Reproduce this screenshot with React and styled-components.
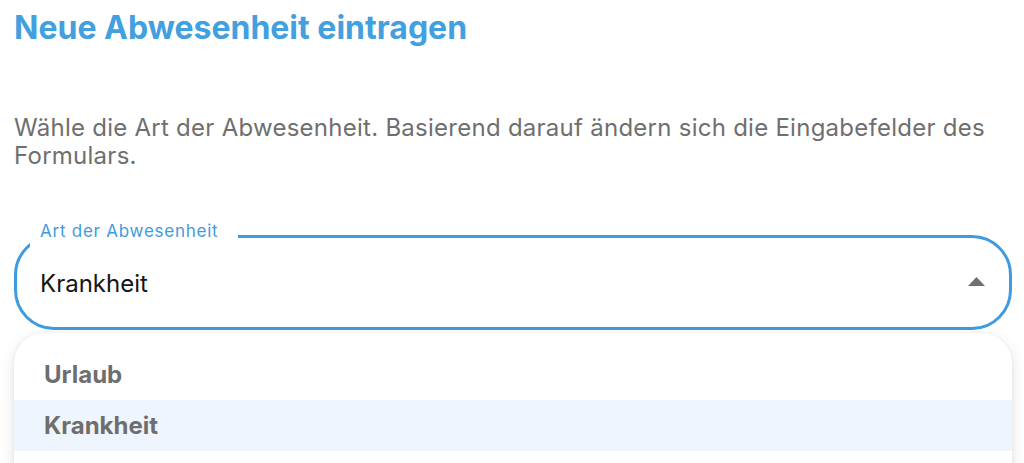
import { createGlobalStyle, styled } from "styled-components";

const GlobalStyle = createGlobalStyle`
  html, body {
    margin: 0;
    padding: 0;
    background: #ffffff;
    font-family: Inter, "Noto Sans", sans-serif;
  }
`;

const Page = styled.div`
  padding: 9px 12px 0 14px;
  height: 463px;
  box-sizing: border-box;
  overflow: hidden;
`;

const Title = styled.h2`
  margin: 0;
  color: #42a0e0;
  font-size: 32px;
  font-weight: 700;
  line-height: 38px;
  letter-spacing: 0;
`;

const Intro = styled.p`
  margin: 67px 0 0;
  color: #6f6f6f;
  font-size: 24px;
  line-height: 28px;
  font-weight: 400;
  letter-spacing: 0.26px;
`;

const Field = styled.fieldset`
  margin: 52px 0 0;
  padding: 0 24px 10px 23px;
  height: 108px;
  box-sizing: border-box;
  border: 3px solid #3f9be0;
  border-radius: 40px;
  display: flex;
  align-items: center;
  justify-content: space-between;
`;

const Legend = styled.legend`
  padding: 0 20px 10px 10px;
  margin-left: -10px;
  color: #3f9be0;
  font-size: 17px;
  line-height: 18px;
  letter-spacing: 0.75px;
`;

const Value = styled.span`
  color: #151515;
  font-size: 24px;
  line-height: 28px;
`;

const Caret = styled.svg`
  width: 17px;
  height: 9px;
  margin-top: -4px;
`;

const Menu = styled.ul`
  list-style: none;
  margin: 3px 0 0;
  padding: 16px 0 40px;
  background: #ffffff;
  border-radius: 30px 30px 0 0;
  box-shadow: 0 4px 14px rgba(0, 0, 0, 0.12), 0 0 3px rgba(0, 0, 0, 0.06);
`;

const Item = styled.li`
  height: 51px;
  display: flex;
  align-items: center;
  padding-left: 30px;
  color: #6e6e6e;
  font-size: 24px;
  font-weight: 700;
  background: ${({ $active }) => ($active ? "#eef5fc" : "transparent")};
`;

const options = ["Urlaub", "Krankheit"];

export default function App() {
  const selected = "Krankheit";
  return (
    <>
      <GlobalStyle />
      <Page>
        <Title>Neue Abwesenheit eintragen</Title>
        <Intro>
          Wähle die Art der Abwesenheit. Basierend darauf ändern sich die
          Eingabefelder des Formulars.
        </Intro>
        <Field>
          <Legend>Art der Abwesenheit</Legend>
          <Value>{selected}</Value>
          <Caret viewBox="0 0 17 9">
            <path d="M0 9 L8.5 0 L17 9 Z" fill="#6f6f6f" />
          </Caret>
        </Field>
        <Menu>
          {options.map((o) => (
            <Item key={o} $active={o === selected}>
              {o}
            </Item>
          ))}
        </Menu>
      </Page>
    </>
  );
}
